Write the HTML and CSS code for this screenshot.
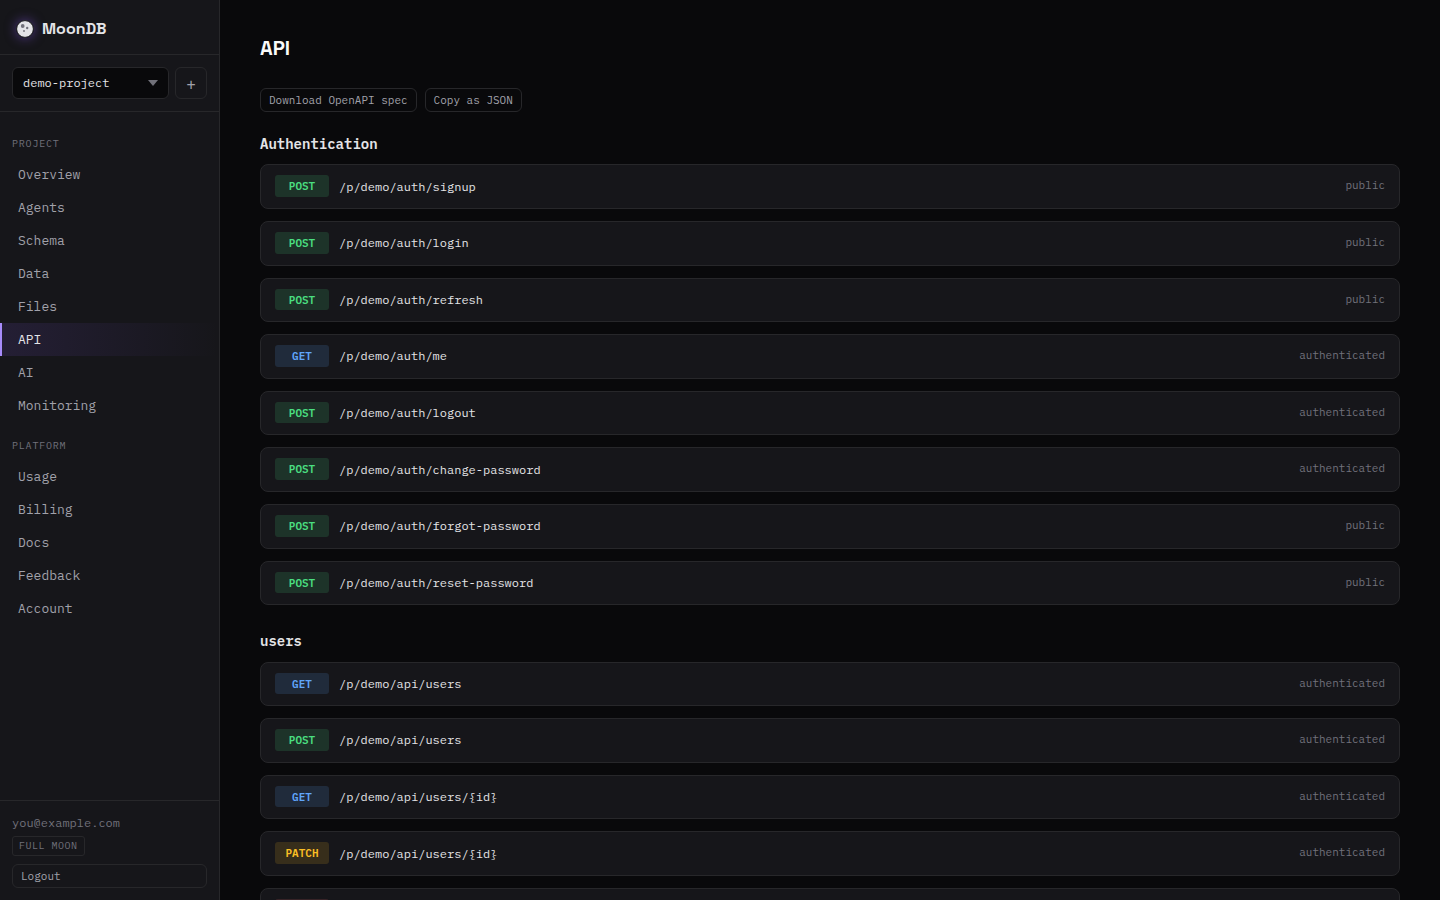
FILE: index.html
```html
<!DOCTYPE html>
<html lang="en">
  <head>
    <meta charset="UTF-8" />
    <meta name="viewport" content="width=device-width, initial-scale=1.0" />
    <title>MoonDB - API</title>
    <link rel="stylesheet" href="styles.css">
  </head>
  <body>
    <aside class="sidebar">
      <div class="brand">
        <svg class="moon" viewBox="0 0 18 18" aria-hidden="true">
          <circle cx="9" cy="9" r="8.4" fill="#e4e4e7" stroke="#16161a" stroke-width="1" />
          <circle cx="6.7" cy="6" r="1.9" fill="#71717a" />
          <circle cx="11.2" cy="8" r="1.2" fill="#71717a" />
          <circle cx="8" cy="11" r="0.9" fill="#71717a" />
        </svg>
        <span class="brand-name">MoonDB</span>
      </div>
      <div class="project-picker">
        <div class="select-wrap">
          <select id="project" aria-label="Project">
            <option>demo-project</option>
          </select>
        </div>
        <button class="add-btn" type="button" aria-label="New project">+</button>
      </div>
      <nav class="nav">
        <div class="nav-label">PROJECT</div>
        <a href="#overview">Overview</a>
        <a href="#agents">Agents</a>
        <a href="#schema">Schema</a>
        <a href="#data">Data</a>
        <a href="#files">Files</a>
        <a href="#api" class="active">API</a>
        <a href="#ai">AI</a>
        <a href="#monitoring">Monitoring</a>
        <div class="nav-label">PLATFORM</div>
        <a href="#usage">Usage</a>
        <a href="#billing">Billing</a>
        <a href="#docs">Docs</a>
        <a href="#feedback">Feedback</a>
        <a href="#account">Account</a>
      </nav>
      <div class="sidebar-footer">
        <div class="email">you@example.com</div>
        <span class="plan">FULL MOON</span>
        <button class="btn logout" type="button">Logout</button>
      </div>
    </aside>

    <main class="main">
      <h1>API</h1>
      <div class="actions">
        <button class="btn" type="button">Download OpenAPI spec</button>
        <button class="btn" type="button">Copy as JSON</button>
      </div>

      <section class="group">
        <h2>Authentication</h2>
        <div class="endpoints">
          <div class="endpoint"><span class="method post">POST</span><code>/p/demo/auth/signup</code><span class="access">public</span></div>
          <div class="endpoint"><span class="method post">POST</span><code>/p/demo/auth/login</code><span class="access">public</span></div>
          <div class="endpoint"><span class="method post">POST</span><code>/p/demo/auth/refresh</code><span class="access">public</span></div>
          <div class="endpoint"><span class="method get">GET</span><code>/p/demo/auth/me</code><span class="access">authenticated</span></div>
          <div class="endpoint"><span class="method post">POST</span><code>/p/demo/auth/logout</code><span class="access">authenticated</span></div>
          <div class="endpoint"><span class="method post">POST</span><code>/p/demo/auth/change-password</code><span class="access">authenticated</span></div>
          <div class="endpoint"><span class="method post">POST</span><code>/p/demo/auth/forgot-password</code><span class="access">public</span></div>
          <div class="endpoint"><span class="method post">POST</span><code>/p/demo/auth/reset-password</code><span class="access">public</span></div>
        </div>
      </section>

      <section class="group">
        <h2>users</h2>
        <div class="endpoints">
          <div class="endpoint"><span class="method get">GET</span><code>/p/demo/api/users</code><span class="access">authenticated</span></div>
          <div class="endpoint"><span class="method post">POST</span><code>/p/demo/api/users</code><span class="access">authenticated</span></div>
          <div class="endpoint"><span class="method get">GET</span><code>/p/demo/api/users/{id}</code><span class="access">authenticated</span></div>
          <div class="endpoint"><span class="method patch">PATCH</span><code>/p/demo/api/users/{id}</code><span class="access">authenticated</span></div>
          <div class="endpoint"><span class="method delete">DELETE</span><code>/p/demo/api/users/{id}</code><span class="access">authenticated</span></div>
        </div>
      </section>
    </main>
  </body>
</html>
```
FILE: styles.css
```css
:root {
  --bg: #09090b;
  --panel: #16161a;
  --border: #27272a;
  --text: #e4e4e7;
  --muted: #a1a1aa;
  --dim: #71717a;
  --accent: #a78bfa;
  --mono: "IBM Plex Mono", "Liberation Mono", monospace;
  --display: "Space Grotesk", Inter, sans-serif;
}
* {
  box-sizing: border-box;
}
body {
  display: flex;
  height: 100vh;
  margin: 0;
  overflow: hidden;
  background: var(--bg);
  color: var(--text);
  font-family: var(--mono);
  font-size: 14px;
  line-height: 1.6;
}
button,
select {
  font-family: inherit;
}

/* sidebar */
.sidebar {
  display: flex;
  flex-direction: column;
  flex: none;
  width: 220px;
  background: var(--panel);
  border-right: 1px solid var(--border);
}
.brand {
  display: flex;
  align-items: center;
  gap: 8px;
  padding: 17px 16px 13px;
  border-bottom: 1px solid var(--border);
}
.moon {
  width: 18px;
  height: 18px;
  border-radius: 50%;
  box-shadow: 0 0 12px rgba(139, 92, 246, 0.5);
}
.brand-name {
  font-family: var(--display);
  font-size: 16px;
  font-weight: 700;
  line-height: 24px;
}
.project-picker {
  display: flex;
  gap: 6px;
  padding: 12px;
  border-bottom: 1px solid var(--border);
}
.select-wrap {
  position: relative;
  flex: 1;
}
.select-wrap::after {
  content: "";
  position: absolute;
  top: 13px;
  right: 11px;
  border: 5px solid transparent;
  border-top: 6px solid var(--dim);
  border-bottom: 0;
  pointer-events: none;
}
.select-wrap select {
  appearance: none;
  width: 100%;
  height: 32px;
  padding: 0 10px 2px;
  background: var(--bg);
  color: var(--text);
  border: 1px solid var(--border);
  border-radius: 6px;
  font-size: 12px;
}
.add-btn {
  width: 32px;
  height: 32px;
  padding: 1px 0 0;
  background: transparent;
  color: var(--muted);
  border: 1px solid var(--border);
  border-radius: 6px;
  font-size: 16px;
}
.nav {
  flex: 1;
  padding: 8px 0;
}
.nav-label {
  margin: 16px 12px 6px;
  color: var(--dim);
  font-size: 10px;
  line-height: 16px;
  letter-spacing: 0.08em;
}
.nav a {
  display: block;
  padding: 6px 16px;
  border-left: 2px solid transparent;
  color: var(--muted);
  font-size: 13px;
  line-height: 21px;
  text-decoration: none;
}
.nav a.active {
  border-left-color: var(--accent);
  background: linear-gradient(90deg, rgba(139, 92, 246, 0.12), transparent);
  color: var(--text);
}
.sidebar-footer {
  padding: 12px;
  border-top: 1px solid var(--border);
}
.email {
  margin-bottom: 3px;
  color: var(--dim);
  font-size: 12px;
  line-height: 20px;
}
.plan {
  display: block;
  width: fit-content;
  margin-bottom: 8px;
  padding: 1px 6px;
  border: 1px solid var(--border);
  border-radius: 3px;
  color: var(--dim);
  font-size: 10px;
  line-height: 16px;
  letter-spacing: 0.05em;
}
.btn {
  padding: 3px 8px;
  background: transparent;
  color: var(--muted);
  border: 1px solid var(--border);
  border-radius: 6px;
  font-size: 11px;
  line-height: 16px;
}
.logout {
  display: block;
  width: 100%;
  text-align: left;
}

/* content */
.main {
  flex: 1;
  min-width: 0;
  padding: 32px 40px;
  overflow-y: auto;
  scrollbar-width: none;
}
h1 {
  margin: 0 0 24px;
  color: #fafafa;
  font-family: var(--display);
  font-size: 20px;
  font-weight: 700;
  line-height: 32px;
}
.actions {
  display: flex;
  gap: 8px;
  margin-bottom: 21px;
}
.group {
  margin-bottom: 25px;
}
h2 {
  margin: 0 0 9px;
  font-size: 14px;
  font-weight: 600;
}
.endpoints {
  display: flex;
  flex-direction: column;
  gap: 12px;
}
.endpoint {
  display: flex;
  align-items: center;
  gap: 10px;
  padding: 10px 14px 11px;
  background: var(--panel);
  border: 1px solid var(--border);
  border-radius: 8px;
}
.endpoint code {
  font-family: inherit;
  font-size: 12px;
}
.method {
  min-width: 54px;
  padding: 3px 7px 1px;
  border-radius: 3px;
  font-size: 11px;
  font-weight: 600;
  text-align: center;
}
.post {
  background: rgba(74, 222, 128, 0.15);
  color: #4ade80;
}
.get {
  background: rgba(96, 165, 250, 0.15);
  color: #60a5fa;
}
.patch {
  background: rgba(251, 191, 36, 0.15);
  color: #fbbf24;
}
.delete {
  background: rgba(248, 113, 113, 0.15);
  color: #f87171;
}
.access {
  margin-left: auto;
  color: var(--dim);
  font-size: 11px;
}
```
